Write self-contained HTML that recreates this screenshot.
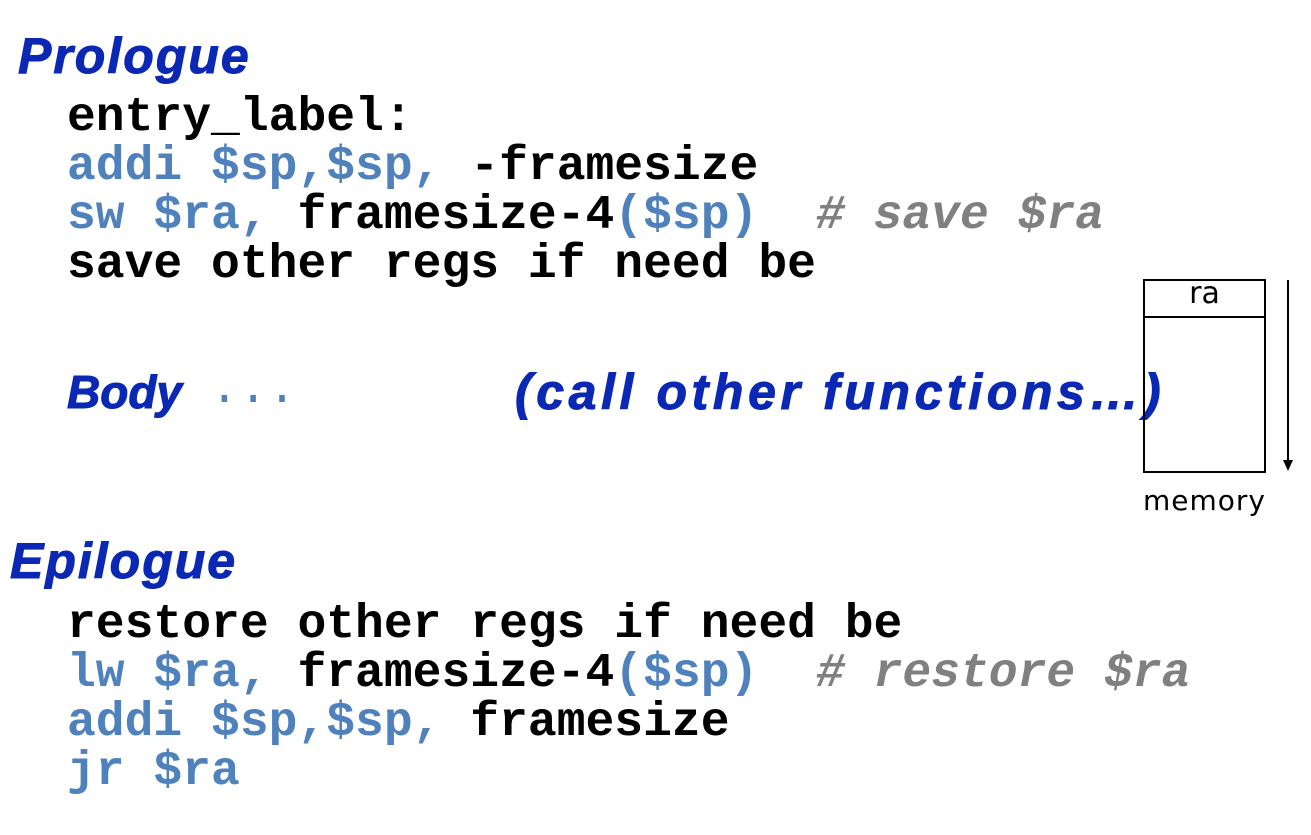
<!DOCTYPE html>
<html><head><style>
body{margin:0;width:1311px;height:835px;background:#fff;position:relative;overflow:hidden}
.m{position:absolute;left:67px;font:bold 48px/49px "Liberation Mono",monospace;white-space:pre;color:#000}
.b{color:#4f81bd}.g{color:#808080;font-style:italic}
.h{position:absolute;font:bold italic 50px/52px "Liberation Sans",sans-serif;color:#0a28b4;letter-spacing:2px;white-space:pre;-webkit-text-stroke:1px #0a28b4}
</style></head><body>
<div class="h" style="left:18px;top:30px">Prologue</div>
<div class="m" style="top:94px">entry_label:</div>
<div class="m" style="top:143px"><span class="b">addi $sp,$sp,</span> -framesize</div>
<div class="m" style="top:192px"><span class="b">sw $ra,</span> framesize-4<span class="b">($sp)</span>  <span class="g"># save $ra</span></div>
<div class="m" style="top:241px">save other regs if need be</div>
<div class="h" style="left:67px;top:366px;font-size:46px;letter-spacing:0">Body</div>
<div class="m b" style="left:210px;top:366px;font-weight:normal">...</div>
<div class="h" style="left:515px;top:366px;letter-spacing:4.6px">(call other functions…)</div>
<div class="h" style="left:10px;top:535px">Epilogue</div>
<div class="m" style="top:601px">restore other regs if need be</div>
<div class="m" style="top:650px"><span class="b">lw $ra,</span> framesize-4<span class="b">($sp)</span>  <span class="g"># restore $ra</span></div>
<div class="m" style="top:699px"><span class="b">addi $sp,$sp,</span> framesize</div>
<div class="m" style="top:748px"><span class="b">jr $ra</span></div>
<div style="position:absolute;left:1143px;top:279px;width:119px;height:190px;border:2px solid #000"></div>
<div style="position:absolute;left:1143px;top:316px;width:121px;height:2px;background:#000"></div>
<div style="position:absolute;left:1144px;top:277px;width:121px;text-align:center;font:30px/34px 'DejaVu Sans',sans-serif">ra</div>
<div style="position:absolute;left:1287px;top:280px;width:2px;height:182px;background:#000"></div>
<div style="position:absolute;left:1283px;top:460px;width:0;height:0;border-left:5px solid transparent;border-right:5px solid transparent;border-top:11px solid #000"></div>
<div style="position:absolute;left:1140px;top:484px;width:129px;text-align:center;font:28px/34px 'DejaVu Sans',sans-serif;letter-spacing:1px">memory</div>
</body></html>
